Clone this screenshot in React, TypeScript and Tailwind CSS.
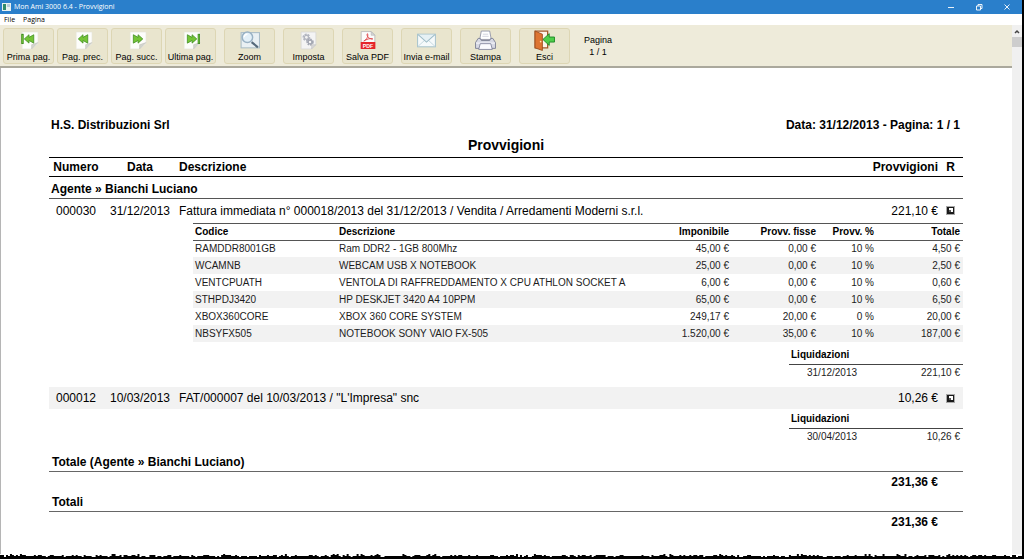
import type { ReactNode } from 'react';

const sheet = (
  <>
    <path d="M4 2h15v11l-6 5H4z" fill="#fdfdfb" stroke="#e4e4da" strokeWidth=".5" />
    <path d="M19 12l-6 6v-4z" fill="#d3d5cf" stroke="#bdbeb4" strokeWidth=".5" />
  </>
);

const arrow = { fill: '#74c436', stroke: '#3a8a1c', strokeWidth: 0.7 };

const FirstIcon = (
  <>
    {sheet}
    <rect x="3.500" y="4" width="1.500" height="9" {...arrow} />
    <path d="M10.500 4.500v2.500l4.500-2.500v8l-4.500-2.500v2.500L6 8.500z" {...arrow} />
  </>
);
const PrevIcon = (
  <>
    {sheet}
    <path d="M10.500 4.500v2.500l4.500-2.500v8l-4.500-2.500v2.500L6 8.500z" {...arrow} />
  </>
);
const NextIcon = (
  <>
    {sheet}
    <path d="M11.500 4.500v2.500L7 4.500v8l4.500-2.500v2.500L16 8.500z" {...arrow} />
  </>
);
const LastIcon = (
  <>
    {sheet}
    <path d="M11.500 4.500v2.500L7 4.500v8l4.500-2.500v2.500L16 8.500z" {...arrow} />
    <rect x="17.200" y="4" width="1.500" height="9" {...arrow} />
  </>
);
const ZoomIcon = (
  <>
    <rect x="2" y="2.500" width="17.500" height="14.500" fill="#e9f0f3" stroke="#a9bcc6" />
    <path d="M12 11.500l6 5" stroke="#55697a" strokeWidth="2" />
    <circle cx="8" cy="7" r="5" fill="#e3f0f8" stroke="#9ab2c4" strokeWidth="1.400" />
    <path d="M5 7a3 3 0 013-3" stroke="#fff" strokeWidth="1.300" fill="none" />
  </>
);
const SetupIcon = (
  <>
    <path d="M3 2h14v12l-4 4H3z" fill="#f4f4f4" stroke="#d6d6d6" strokeWidth=".7" />
    <circle cx="8" cy="7" r="2.700" fill="none" stroke="#b3b6c0" strokeWidth="2" strokeDasharray="1.800 .9" />
    <circle cx="8" cy="7" r="2" fill="none" stroke="#b3b6c0" strokeWidth="1.200" />
    <circle cx="11.500" cy="11.500" r="2.500" fill="none" stroke="#a3a7b2" strokeWidth="2" strokeDasharray="1.500 .8" />
    <circle cx="11.500" cy="11.500" r="1.800" fill="none" stroke="#a3a7b2" strokeWidth="1.200" />
    <path d="M17 14l-4 4v-4z" fill="#d8d8d8" stroke="#bbb" strokeWidth=".5" />
  </>
);
const PdfIcon = (
  <>
    <path d="M4 1.500h9.500L17 5v7H4z" fill="#fbfbfb" stroke="#b9b9b9" strokeWidth=".8" />
    <path d="M13.500 1.500V5H17z" fill="#d6d6d6" stroke="#aaa" strokeWidth=".5" />
    <path d="M6.500 10.500c3-1.500 4.500-5 3.500-7-1.300 1 .5 5.500 5 5-3-1-6 .5-8.500 2z" fill="none" stroke="#e0474a" strokeWidth=".9" />
    <rect x="3.500" y="11.500" width="14" height="6.500" rx=".5" fill="#e5252a" />
    <text x="10.500" y="16.700" textAnchor="middle" fontSize="5" fontWeight="700" fill="#fff">PDF</text>
  </>
);
const MailIcon = (
  <>
    <rect x="1.500" y="4" width="17" height="12" fill="#f6fafb" stroke="#a9c4cd" />
    <path d="M2 15.500l6-5.500M18 15.500L12 10" stroke="#c3d7de" strokeWidth=".9" />
    <path d="M2 4.500l8 7 8-7" fill="#e6f1f5" stroke="#9dbbc6" />
  </>
);
const PrintIcon = (
  <>
    <path d="M6 1h8l1.500 8h-11z" fill="#fff" stroke="#8b8fa3" strokeWidth=".8" />
    <path d="M3 8h2l1 2h8l1-2h2l2.500 4v5.500H.5V12z" fill="#d7d9e4" stroke="#74788f" strokeWidth=".8" />
    <path d="M1 12.500h18" stroke="#f6f6fb" />
    <path d="M5 13h10l1.500 5.500h-13z" fill="#fafafd" stroke="#7d8198" strokeWidth=".8" />
    <path d="M7.500 4h5M7 6h6" stroke="#c3c5d2" strokeWidth=".7" />
  </>
);
const ExitIcon = (
  <>
    <path d="M1 1h12v16H1z" fill="#fdf5ea" stroke="#a25a2c" strokeWidth="1.200" />
    <path d="M1 1l7 3v15.500L1 17z" fill="#dd7431" stroke="#9a4a1c" strokeWidth=".8" />
    <circle cx="6.300" cy="11" r=".8" fill="#ffe4b0" />
    <path d="M8.500 9l6-5.500v3.200h5v4.800h-5v3.200z" fill="#4fce4a" stroke="#1f8a28" strokeWidth=".9" />
  </>
);

function ToolButton({ label, children }: { label: string; children: ReactNode }) {
  return (
    <button
      type="button"
      className="flex h-9 w-[51px] shrink-0 flex-col items-center justify-between rounded-[3px] border border-[#ddd6b4] bg-[#e9e5ce] pt-px text-[9px] leading-[12px] whitespace-nowrap text-black"
    >
      <svg viewBox="0 0 20 20" className="size-[21px]" fill="none" aria-hidden="true">
        {children}
      </svg>
      {label}
    </button>
  );
}

type Item = [string, string, string, string, string, string];

const items: Item[] = [
  ['RAMDDR8001GB', 'Ram DDR2 - 1GB 800Mhz', '45,00 €', '0,00 €', '10 %', '4,50 €'],
  ['WCAMNB', 'WEBCAM USB X NOTEBOOK', '25,00 €', '0,00 €', '10 %', '2,50 €'],
  ['VENTCPUATH', 'VENTOLA DI RAFFREDDAMENTO X CPU ATHLON SOCKET A', '6,00 €', '0,00 €', '10 %', '0,60 €'],
  ['STHPDJ3420', 'HP DESKJET 3420 A4 10PPM', '65,00 €', '0,00 €', '10 %', '6,50 €'],
  ['XBOX360CORE', 'XBOX 360 CORE SYSTEM', '249,17 €', '20,00 €', '0 %', '20,00 €'],
  ['NBSYFX505', 'NOTEBOOK SONY VAIO FX-505', '1.520,00 €', '35,00 €', '10 %', '187,00 €'],
];

function ItemsTable() {
  return (
    <table className="w-full table-fixed border-collapse text-[10px] leading-[16px] whitespace-nowrap text-[#1c1c1c]">
      <colgroup>
        <col className="w-36" />
        <col />
        <col className="w-[90px]" />
        <col className="w-[87px]" />
        <col className="w-[58px]" />
        <col className="w-[89px]" />
      </colgroup>
      <thead>
        <tr className="h-[17px] border-y border-[#555] text-black">
          <th className="p-0 pl-0.5 text-left">Codice</th>
          <th className="p-0 pl-0.5 text-left">Descrizione</th>
          <th className="p-0 text-right">Imponibile</th>
          <th className="p-0 text-right">Provv. fisse</th>
          <th className="p-0 text-right">Provv. %</th>
          <th className="p-0 pr-[3px] text-right">Totale</th>
        </tr>
      </thead>
      <tbody>
        {items.map((r) => (
          <tr key={r[0]} className="h-[17px] even:bg-[#f2f2f2]">
            <td className="p-0 pl-0.5">{r[0]}</td>
            <td className="p-0 pl-0.5">{r[1]}</td>
            <td className="p-0 text-right">{r[2]}</td>
            <td className="p-0 text-right">{r[3]}</td>
            <td className="p-0 text-right">{r[4]}</td>
            <td className="p-0 pr-[3px] text-right">{r[5]}</td>
          </tr>
        ))}
      </tbody>
    </table>
  );
}

function Payments({ date, amount }: { date: string; amount: string }) {
  return (
    <table className="ml-auto w-[174px] border-collapse text-[10px] leading-[16px] text-[#1c1c1c]">
      <thead>
        <tr className="h-[17px] border-b border-[#444] text-black">
          <th colSpan={2} className="p-0 pl-0.5 text-left">Liquidazioni</th>
        </tr>
      </thead>
      <tbody>
        <tr className="h-[18px]">
          <td className="p-0 pl-[18px]">{date}</td>
          <td className="p-0 pr-[3px] text-right">{amount}</td>
        </tr>
      </tbody>
    </table>
  );
}

function Flag() {
  return (
    <svg viewBox="0 0 9 9" className="mx-auto block size-[9px]" role="img" aria-label="Riscosso">
      <rect width="9" height="9" fill="#a8a8a8" />
      <rect x="1" y="1" width="7" height="7" fill="#1a1a1a" />
      <rect x="3" y="2" width="4" height="4" fill="#fff" />
      <rect x="3" y="4" width="2" height="2" fill="#555" />
    </svg>
  );
}

function EntryRow({ cells, striped }: { cells: [string, string, string, string]; striped?: boolean }) {
  return (
    <tr className={striped ? 'h-[22px] bg-[#f2f2f2]' : 'h-[24px]'}>
      <td className="p-0 text-center">{cells[0]}</td>
      <td className="p-0 text-center">{cells[1]}</td>
      <td className="p-0 pl-0.5">{cells[2]}</td>
      <td className="p-0 text-right">{cells[3]}</td>
      <td className="p-0"><Flag /></td>
    </tr>
  );
}

function TotalRows({ label, amount }: { label: string; amount: string }) {
  return (
    <>
      <tr className="h-[18px] border-b border-[#666]">
        <th colSpan={5} className="p-0 pl-[3px] text-left">{label}</th>
      </tr>
      <tr className="h-[22px] align-middle">
        <td colSpan={4} className="p-0 text-right font-bold">{amount}</td>
        <td />
      </tr>
    </>
  );
}

// Ragged lower edge of the sheet.
const edgeHeights = [1, 2, 1, 2, 2, 0, 1, 1, 0, 1, 2, 1, 3, 1, 1, 2, 1, 2, 1, 1, 1, 0, 2];
let seed = 17;
const tornEdge =
  'M0 5' +
  Array.from({ length: 513 }, (_, i) => {
    seed = (seed * 1103 + 377) % 7919;
    return `V${3 - edgeHeights[seed % edgeHeights.length]}H${(i + 1) * 2}`;
  }).join('') +
  'V5z';

export default function App() {
  return (
    <div className="flex min-h-screen flex-col border-r-2 border-black bg-white font-['Liberation_Sans',Arial,sans-serif] text-black">
      <header className="flex h-3.5 items-center bg-[#2a7fcb] pl-0.5 font-['Open_Sans','Noto_Sans',sans-serif] text-[7px] leading-[12px] text-white">
        <svg viewBox="0 0 9 8" className="mr-[3px] h-2 w-[9px]" aria-hidden="true">
          <rect width="9" height="8" fill="#e8f1f0" />
          <rect x="1" y="1" width="3" height="6" fill="#2f8a6a" />
          <rect x="5" y="1" width="3" height="3" fill="#b7cbd8" />
        </svg>
        <h1>Mon Ami 3000 6.4 - Provvigioni</h1>
        <div className="ml-auto flex gap-5 pr-[11px]">
          <button type="button" aria-label="Riduci a icona" className="size-2">
            <svg viewBox="0 0 8 8" fill="none" stroke="#fff" strokeWidth=".9"><path d="M1 4.500h6" /></svg>
          </button>
          <button type="button" aria-label="Ripristina" className="size-2">
            <svg viewBox="0 0 8 8" fill="none" stroke="#fff" strokeWidth=".9"><path d="M1.500 3h4v4h-4zM3 3V1.500h4v4H5.500" /></svg>
          </button>
          <button type="button" aria-label="Chiudi" className="size-2">
            <svg viewBox="0 0 8 8" fill="none" stroke="#fff" strokeWidth=".9"><path d="M1.500 1.500l5 5M6.500 1.500l-5 5" /></svg>
          </button>
        </div>
      </header>
      <nav className="flex h-[11px] items-center gap-2 pl-1 font-['Open_Sans','Noto_Sans',sans-serif] text-[7px] leading-[11px]">
        <button type="button">File</button>
        <button type="button">Pagina</button>
      </nav>
      <div className="flex flex-1">
        <div className="flex min-w-0 flex-1 flex-col">
          <div className="flex h-[43px] items-center gap-2 border-b-2 border-[#aaa89c] bg-[#eeebda] pl-[3px]">
            <div className="flex gap-[3px]">
              <ToolButton label="Prima pag.">{FirstIcon}</ToolButton>
              <ToolButton label="Pag. prec.">{PrevIcon}</ToolButton>
              <ToolButton label="Pag. succ.">{NextIcon}</ToolButton>
              <ToolButton label="Ultima pag.">{LastIcon}</ToolButton>
            </div>
            <ToolButton label="Zoom">{ZoomIcon}</ToolButton>
            <ToolButton label="Imposta">{SetupIcon}</ToolButton>
            <ToolButton label="Salva PDF">{PdfIcon}</ToolButton>
            <ToolButton label="Invia e-mail">{MailIcon}</ToolButton>
            <ToolButton label="Stampa">{PrintIcon}</ToolButton>
            <ToolButton label="Esci">{ExitIcon}</ToolButton>
            <p className="pl-1.5 text-center text-[9px] leading-[12px]">
              Pagina
              <br />1 / 1
            </p>
          </div>
          <main className="flex-1 border-l border-[#b5b5b5] pt-[50px] pr-[49px] pl-12 text-[12px] leading-[14px]">
            <div className="flex justify-between pr-[3px] pl-0.5 font-bold">
              <p>H.S. Distribuzioni Srl</p>
              <p>Data: 31/12/2013 - Pagina: 1 / 1</p>
            </div>
            <h2 className="pt-[5px] pb-1 text-center text-[14px] leading-[16px] font-bold">Provvigioni</h2>
            <table className="w-full table-fixed border-collapse whitespace-nowrap">
              <colgroup>
                <col className="w-[54px]" />
                <col className="w-[74px]" />
                <col />
                <col className="w-[90px]" />
                <col className="w-[25px]" />
              </colgroup>
              <thead>
                <tr className="h-[19px] border-y border-black">
                  <th className="p-0">Numero</th>
                  <th className="p-0">Data</th>
                  <th className="p-0 pl-0.5 text-left">Descrizione</th>
                  <th className="p-0 text-right">Provvigioni</th>
                  <th className="p-0">R</th>
                </tr>
              </thead>
              <tbody>
                <tr className="h-[22px] border-b border-[#555]">
                  <th colSpan={5} className="p-0 pt-0.5 pl-0.5 text-left">Agente » Bianchi Luciano</th>
                </tr>
                <EntryRow
                  cells={[
                    '000030',
                    '31/12/2013',
                    'Fattura immediata n° 000018/2013 del 31/12/2013 / Vendita / Arredamenti Moderni s.r.l.',
                    '221,10 €',
                  ]}
                />
                <tr>
                  <td colSpan={5} className="p-0 pb-[5px] pl-36">
                    <ItemsTable />
                    <div className="pt-[5px]">
                      <Payments date="31/12/2013" amount="221,10 €" />
                    </div>
                  </td>
                </tr>
                <EntryRow
                  striped
                  cells={['000012', '10/03/2013', 'FAT/000007 del 10/03/2013 / "L\'Impresa" snc', '10,26 €']}
                />
                <tr>
                  <td colSpan={5} className="p-0 pt-0.5 pb-[7px]">
                    <Payments date="30/04/2013" amount="10,26 €" />
                  </td>
                </tr>
                <TotalRows label="Totale (Agente » Bianchi Luciano)" amount="231,36 €" />
                <TotalRows label="Totali" amount="231,36 €" />
              </tbody>
            </table>
          </main>
        </div>
        <div className="flex w-2.5 shrink-0 flex-col bg-[#f0f0f0]" aria-hidden="true">
          <svg viewBox="0 0 10 12" className="h-3 w-2.5" fill="none" stroke="#444" strokeWidth="1.500">
            <path d="M3 8l2-2 2 2" />
          </svg>
          <div className="h-2.5 bg-[#cdcdcd]" />
        </div>
      </div>
      <svg viewBox="0 0 1026 5" preserveAspectRatio="none" className="h-[5px] w-full bg-white" aria-hidden="true">
        <path d={tornEdge} fill="#000" />
      </svg>
    </div>
  );
}
